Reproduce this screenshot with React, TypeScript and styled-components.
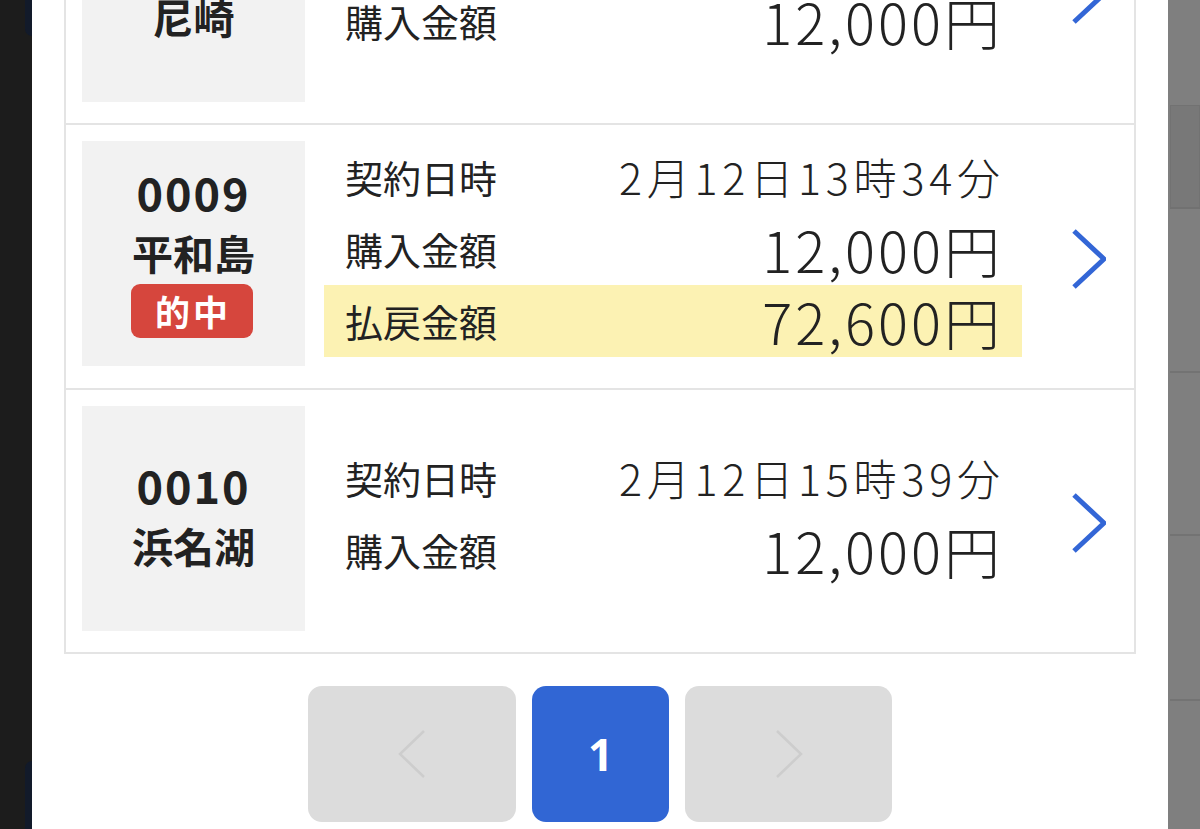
import React from "react";
import styled, { createGlobalStyle } from "styled-components";

const Global = createGlobalStyle`
  html, body { margin: 0; padding: 0; width: 1200px; height: 829px; overflow: hidden; }
  body { font-family: "Noto Sans CJK JP", "Noto Sans", sans-serif; color: #222; background: #1c1c1c; }
  * { box-sizing: border-box; }
`;

const Screen = styled.div`
  display: flex;
  width: 1200px;
  height: 829px;
  overflow: hidden;
`;

const LeftStrip = styled.div`
  width: 32px;
  flex: none;
  background: #1c1c1c;
  display: flex;
  flex-direction: column;
  align-items: flex-end;
  justify-content: space-between;
`;

const NavyEdge = styled.div<{ $h: number; $top?: boolean }>`
  width: 7px;
  height: ${(p) => p.$h}px;
  background: #121a2a;
  border-radius: ${(p) => (p.$top ? "0 0 0 8px" : "8px 0 0 0")};
`;

const RightStrip = styled.div`
  width: 32px;
  flex: none;
  background: #7f7f7f;
  display: flex;
  flex-direction: column;
`;

const StripSeg = styled.div<{ $h: number; $dark?: boolean; $line?: boolean }>`
  height: ${(p) => p.$h}px;
  flex: none;
  margin-left: 2px;
  background: ${(p) => (p.$dark ? "#787878" : "transparent")};
  border: ${(p) => (p.$dark ? "1px solid #727272" : "none")};
  border-bottom: ${(p) => (p.$line ? "2px solid #737373" : p.$dark ? "2px solid #717171" : "none")};
`;

const Modal = styled.div`
  flex: 1;
  background: #fff;
  padding: 0 32px;
  overflow: hidden;
`;

const List = styled.div`
  margin-top: -139px;
  border: 2px solid #e4e4e4;
  border-top: none;
`;

const Card = styled.div`
  display: flex;
  align-items: stretch;
  padding: 16px 0 21px 16px;
  border-top: 2px solid #e4e4e4;
  &:first-child { border-top: none; }
`;

const VenueBox = styled.div`
  width: 223px;
  height: 225px;
  flex: none;
  background: #f2f2f2;
  display: flex;
  flex-direction: column;
  align-items: center;
  justify-content: center;
  padding-bottom: 8px;
  font-weight: 700;
  color: #222;
`;

const RaceNo = styled.div`
  font-size: 45px;
  line-height: 60px;
  letter-spacing: 2px;
`;

const VenueName = styled.div`
  font-size: 41px;
  line-height: 60px;
`;

const Badge = styled.div`
  margin-top: 2px;
  margin-right: 4px;
  width: 122px;
  height: 54px;
  border-radius: 9px;
  background: #d6463d;
  color: #fff;
  font-size: 35px;
  line-height: 54px;
  text-align: center;
  letter-spacing: 3px;
  padding-left: 3px;
`;

const Rows = styled.div`
  flex: 1;
  margin-left: 19px;
  display: flex;
  flex-direction: column;
  justify-content: center;
  padding-bottom: 10px;
`;

const Row = styled.div<{ $hl?: boolean }>`
  height: 72px;
  flex: none;
  display: flex;
  align-items: center;
  justify-content: space-between;
  padding: 0 22px 0 21px;
  background: ${(p) => (p.$hl ? "#fcf2b3" : "transparent")};
`;

const Label = styled.span`
  font-size: 38px;
  line-height: 1.3;
  font-weight: 400;
  color: #222;
`;

const Value = styled.span<{ $big?: boolean }>`
  font-size: ${(p) => (p.$big ? 56 : 43)}px;
  line-height: 1.2;
  letter-spacing: ${(p) => (p.$big ? 3 : 4.8)}px;
  margin-right: ${(p) => (p.$big ? -3 : -4.8)}px;
  font-weight: 300;
  color: #222;
  white-space: nowrap;
`;

const ArrowCell = styled.div`
  width: 112px;
  flex: none;
  display: flex;
  align-items: center;
  justify-content: center;
  margin-bottom: -21px;
  margin-top: -16px;
  padding: 4px 0 0 22px;
`;

const Pager = styled.div`
  display: flex;
  justify-content: center;
  gap: 16px;
  margin-top: 32px;
`;

const PageBtn = styled.div<{ $active?: boolean; $w: number }>`
  width: ${(p) => p.$w}px;
  height: 136px;
  border-radius: 14px;
  background: ${(p) => (p.$active ? "#3166d4" : "#dcdcdc")};
  color: #fff;
  display: flex;
  align-items: center;
  justify-content: center;
  font-family: "Open Sans", "Noto Sans", sans-serif;
  font-weight: 700;
  font-size: 44px;
`;

const Chevron = ({ dir = "right", color, w, h, sw }: { dir?: "left" | "right"; color: string; w: number; h: number; sw: number }) => {
  const pts = dir === "right" ? `2,2 ${w - 2},${h / 2} 2,${h - 2}` : `${w - 2},2 2,${h / 2} ${w - 2},${h - 2}`;
  return (
    <svg width={w} height={h} viewBox={`0 0 ${w} ${h}`}>
      <polyline points={pts} fill="none" stroke={color} strokeWidth={sw} strokeLinecap="butt" strokeLinejoin="miter" />
    </svg>
  );
};

type Item = { no: string; venue: string; date: string; amount: string; hit?: boolean; payout?: string };

const items: Item[] = [
  { no: "0008", venue: "尼崎", date: "2月12日11時20分", amount: "12,000円" },
  { no: "0009", venue: "平和島", date: "2月12日13時34分", amount: "12,000円", hit: true, payout: "72,600円" },
  { no: "0010", venue: "浜名湖", date: "2月12日15時39分", amount: "12,000円" },
];

export default function App() {
  return (
    <>
      <Global />
      <Screen>
        <LeftStrip>
          <NavyEdge $h={36} $top />
          <NavyEdge $h={68} />
        </LeftStrip>
        <Modal>
          <List>
            {items.map((it) => (
              <Card key={it.no}>
                <VenueBox>
                  <RaceNo>{it.no}</RaceNo>
                  <VenueName>{it.venue}</VenueName>
                  {it.hit && <Badge>的中</Badge>}
                </VenueBox>
                <Rows>
                  <Row>
                    <Label>契約日時</Label>
                    <Value>{it.date}</Value>
                  </Row>
                  <Row>
                    <Label>購入金額</Label>
                    <Value $big>{it.amount}</Value>
                  </Row>
                  {it.payout && (
                    <Row $hl>
                      <Label>払戻金額</Label>
                      <Value $big>{it.payout}</Value>
                    </Row>
                  )}
                </Rows>
                <ArrowCell>
                  <Chevron color="#3366d6" w={34} h={60} sw={5} />
                </ArrowCell>
              </Card>
            ))}
          </List>
          <Pager>
            <PageBtn $w={208}>
              <Chevron dir="left" color="#cdcdcd" w={28} h={50} sw={2.5} />
            </PageBtn>
            <PageBtn $w={137} $active>1</PageBtn>
            <PageBtn $w={207}>
              <Chevron color="#cdcdcd" w={28} h={50} sw={2.5} />
            </PageBtn>
          </Pager>
        </Modal>
        <RightStrip>
          <StripSeg $h={105} />
          <StripSeg $h={104} $dark />
          <StripSeg $h={164} $line />
          <StripSeg $h={163} $line />
          <StripSeg $h={165} $line />
        </RightStrip>
      </Screen>
    </>
  );
}
